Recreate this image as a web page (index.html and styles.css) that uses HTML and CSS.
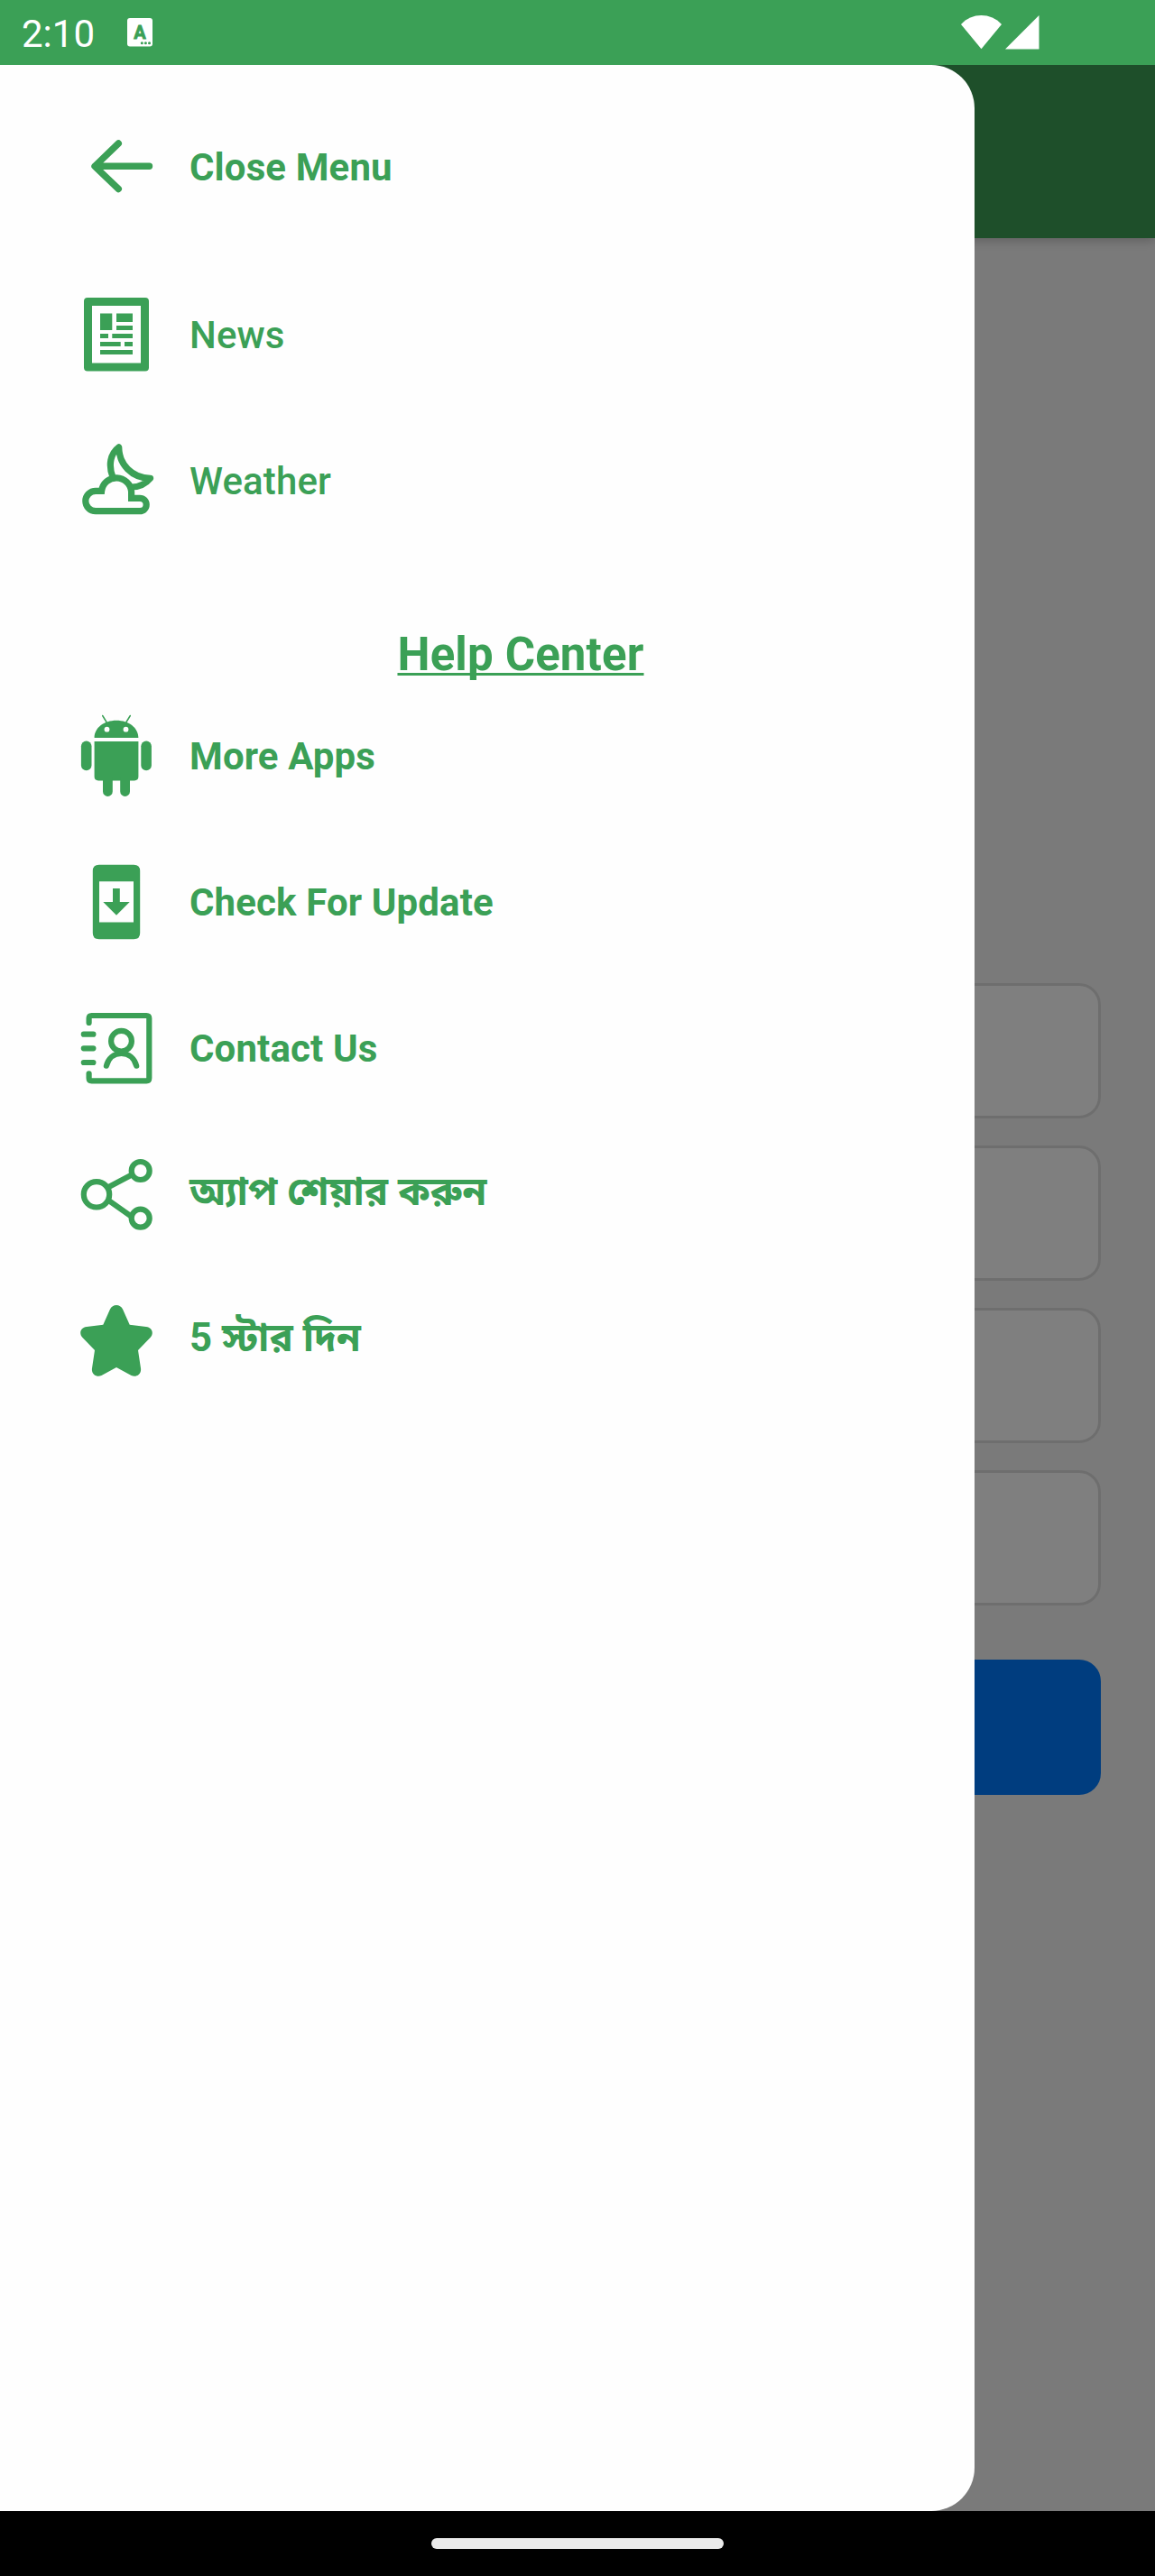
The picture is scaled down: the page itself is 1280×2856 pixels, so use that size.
FILE: index.html
```html
<!DOCTYPE html>
<html lang="bn">
<head>
<meta charset="utf-8">
<title>Menu</title>
<link rel="stylesheet" href="styles.css">
</head>
<body>
<header class="status">
  <span class="time">2:10</span>
  <svg class="status-app" viewBox="0 0 28 32"><rect width="28" height="31.5" rx="3" fill="#fff"/><text class="badge-letter" x="14" y="22.5" text-anchor="middle">A</text><g fill="#3ba056"><circle cx="16.3" cy="27.7" r="1.5"/><circle cx="20.4" cy="27.7" r="1.5"/><circle cx="24.5" cy="27.7" r="1.5"/></g></svg>
  <svg class="signals" viewBox="0 0 88 38" fill="#fff"><path d="M0 10C12-3.300 33-3.300 45 10L22.500 37.300Z"/><path d="M49 37.500 86.500 0V37.500Z"/></svg>
</header>
<main class="screen">
  <div class="appbar"></div>
  <div class="form">
    <div class="field"></div>
    <div class="field"></div>
    <div class="field"></div>
    <div class="field"></div>
    <div class="submit"></div>
  </div>
  <div class="scrim"></div>
  <nav class="drawer">
    <a class="item bold close"><svg class="icon line" viewBox="0 0 100 100" stroke-width="7.4"><path d="M86.500 49.300H26.300M52.300 24 26 49.300 52.300 74.500"/></svg><span>Close Menu</span></a>
    <a class="item"><svg class="icon" viewBox="0 0 100 100"><path fill-rule="evenodd" d="M18 9H82Q86 9 86 13V86.500Q86 90.500 82 90.500H18Q14 90.500 14 86.500V13Q14 9 18 9ZM23 18V81.500H77V18Z"/><path d="M32 26.500H45.300V45H32ZM50 26.500H68V36H50ZM50 40H68V45H50ZM32 49H41V54H32ZM45.300 49H68V54H45.300ZM32 58H54.700V63H32ZM59 58H68V63H59ZM32 67H68V72H32Z"/></svg><span>News</span></a>
    <a class="item"><svg class="icon line" viewBox="0 0 100 100" stroke-width="7.2"><path class="miter" d="M27 83.700A11.200 11.200 0 0 1 27 61.300H33.600A16.600 16.600 0 0 1 66.600 62V69.300H76A7.200 7.200 0 0 1 76 83.700Z"/><path d="M46 46C41 33 43 20 52.700 12.800C53 32 67 47 87.600 47.300C82 54 75 57 67 57"/></svg><span>Weather</span></a>
    <h2 class="section">Help Center</h2>
    <a class="item bold"><svg class="icon" viewBox="0 0 100 100"><path d="M25.600 30C25.600 19 36 10.700 50 10.700S74.400 19 74.400 30ZM25.600 34H74.400V73Q74.400 77.400 70 77.400H30Q25.600 77.400 25.600 73Z"/><rect x="10.900" y="33.500" width="11.600" height="32.700" rx="5.800"/><rect x="77.300" y="33.500" width="11.600" height="32.700" rx="5.800"/><path d="M35 74H45.800V89.500A5.400 5.400 0 0 1 35 89.500ZM54.200 74H65V89.500A5.400 5.400 0 0 1 54.200 89.500Z"/><path class="line" stroke-width="1.500" d="M34.700 5.500 39 12.500M65.300 5.500 61 12.500"/><g fill="#fefefe"><circle cx="39.500" cy="20.700" r="2.900"/><circle cx="60.500" cy="20.700" r="2.900"/></g></svg><span>More Apps</span></a>
    <a class="item bold"><svg class="icon" viewBox="0 0 100 100"><path fill-rule="evenodd" d="M30.700 8.700H69.300Q76.200 8.700 76.200 15.600V84.500Q76.200 91.300 69.300 91.300H30.700Q23.800 91.300 23.800 84.500V15.600Q23.800 8.700 30.700 8.700ZM31 27.300V72.600H69V27.300Z"/><path d="M46 35H53.800V50H64.700L50 64.700 35.300 50H46Z"/></svg><span>Check For Update</span></a>
    <a class="item bold"><svg class="icon line" viewBox="0 0 100 100" stroke-width="6.200"><path d="M19.600 22V17Q19.600 14 22.600 14H83.300Q86.300 14 86.300 17V83.300Q86.300 86.400 83.300 86.400H22.600Q19.600 86.400 19.600 83.300V78.300M13.800 34.700H24.400M13.800 50.300H24.400M13.800 66H24.400M38.900 69.700C41 61.500 47 56 55.500 56S70 61.500 72.200 69.700"/><circle cx="55.500" cy="42.200" r="11.400"/></svg><span>Contact Us</span></a>
    <a class="item bold bn"><svg class="icon line" viewBox="0 0 100 100" stroke-width="6.200"><circle cx="28" cy="50.300" r="14.200"/><circle cx="76.700" cy="24" r="10"/><circle cx="76.700" cy="76.700" r="10"/><path stroke-linecap="butt" d="M41 42.300 67.500 28.300M41.500 57 67 75"/></svg><span>অ্যাপ শেয়ার করুন</span></a>
    <a class="item bold bn"><svg class="icon" viewBox="0 0 100 100"><path d="M50 11C53 11 55.500 12.500 57 15.500L64.700 32.700 83 35C89.500 36 92 42 87.500 47L74 61 77 81C78 87.500 72 91.500 66.500 89L50 80 33.500 89C28 91.500 22 87.500 23 81L26 61 12.500 47C8 42 10.500 36 17 35L35.300 32.700 43 15.500C44.500 12.500 47 11 50 11Z"/></svg><span>5 স্টার দিন</span></a>
  </nav>
</main>
<footer class="navbar"><div class="handle"></div></footer>
</body>
</html>
```

FILE: styles.css
```css
* { box-sizing: border-box; }
body {
  margin: 0;
  width: 1280px;
  height: 2856px;
  display: flex;
  flex-direction: column;
  font-family: Roboto, "Noto Sans Bengali", "Noto Sans", sans-serif;
  color: #3ba056;
}
.status {
  height: 72px;
  flex: none;
  display: flex;
  align-items: flex-start;
  padding: 0 128px 0 24px;
  background: #3ba056;
  color: #fff;
}
.time { font-size: 42px; line-height: 49px; margin-top: 13px; width: 117px; }
.status-app { width: 28px; height: 32px; margin-top: 20px; }
.badge-letter { font: 700 20px Roboto, sans-serif; fill: #3ba056; stroke: #3ba056; stroke-width: 0.8px; }
.signals { width: 88px; height: 38px; margin: 17px 0 0 auto; position: relative; left: 1px; }
.screen { position: relative; flex: 1; background: #f5f5f5; overflow: hidden; }
.appbar { height: 192px; background: #3c9f55; box-shadow: 0 2px 12px rgba(0, 0, 0, 0.25); }
.form { display: flex; flex-direction: column; gap: 30px; padding: 826px 60px 0; }
.field { height: 150px; border: 3px solid #ddd; border-radius: 24px; background: #fff; }
.submit { height: 150px; margin-top: 30px; border-radius: 24px; background: #007bff; }
.scrim { position: absolute; inset: 0; background: rgba(0, 0, 0, 0.5); }
.drawer {
  position: absolute;
  inset: 0 200px 0 0;
  display: flex;
  flex-direction: column;
  padding-top: 32px;
  border-radius: 0 48px 48px 0;
  background: #fefefe;
}
.item {
  height: 162px;
  flex: none;
  display: flex;
  align-items: center;
  gap: 31px;
  padding-left: 79px;
  font-size: 42px;
  font-weight: 500;
  letter-spacing: 0.12px;
}
.bold { font-weight: 700; }
.close { margin-bottom: 24px; }
.bn { font-size: 43.7px; letter-spacing: 0; }
.bn span { margin-bottom: 0; }
.icon { width: 100px; height: 100px; fill: #3ba056; }
.line { fill: none; stroke: #3ba056; stroke-linecap: round; stroke-linejoin: round; }
.miter { stroke-linejoin: miter; }
.section {
  height: 61px;
  margin: 81px 0 1px;
  padding-left: 74px;
  text-align: center;
  font-size: 51px;
  line-height: 61px;
  font-weight: 700;
  letter-spacing: 0.15px;
  text-decoration: underline;
  text-decoration-thickness: 3px;
  text-underline-offset: 3px;
  text-decoration-skip-ink: none;
}
.navbar { height: 72px; flex: none; display: flex; justify-content: center; align-items: center; background: #000; }
.handle { width: 324px; height: 12px; border-radius: 6px; background: #eaeaea; }
```
